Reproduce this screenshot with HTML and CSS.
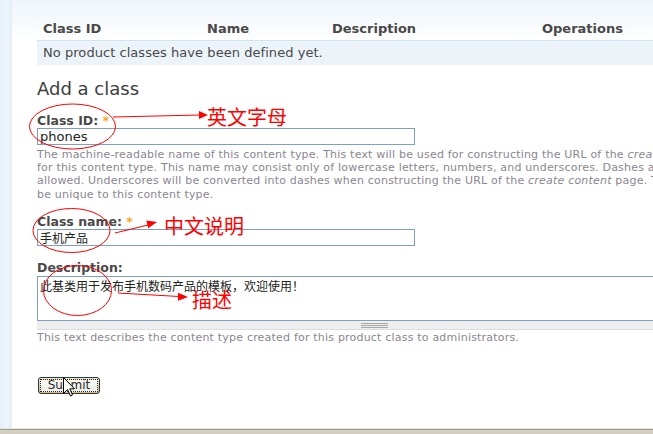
FILE: index.html
```html
<!DOCTYPE html>
<html>
<head>
<meta charset="utf-8">
<link rel="stylesheet" href="styles.css">
</head>
<body>
<div class="page">
  <div class="strip"></div>
  <div class="main">
    <div class="inner">
      <table class="classes">
        <thead>
          <tr>
            <th class="c1">Class ID</th>
            <th class="c2">Name</th>
            <th class="c3">Description</th>
            <th class="c4">Operations</th>
          </tr>
        </thead>
        <tbody>
          <tr><td colspan="4">No product classes have been defined yet.</td></tr>
        </tbody>
      </table>

      <h2 class="title">Add a class</h2>

      <div class="item">
        <label class="lbl">Class ID: <span class="req">*</span></label>
        <div class="input">phones</div>
        <div class="help">The machine-readable name of this content type. This text will be used for constructing the URL of the <em>create content</em> page<br>for this content type. This name may consist only of lowercase letters, numbers, and underscores. Dashes are not<br>allowed. Underscores will be converted into dashes when constructing the URL of the <em>create content</em> page. This name must<br>be unique to this content type.</div>
      </div>

      <div class="item item2">
        <label class="lbl">Class name: <span class="req">*</span></label>
        <div class="input cjk">手机产品</div>
      </div>

      <div class="item item3">
        <label class="lbl lbl-d">Description:</label>
        <div class="textarea cjk">此基类用于发布手机数码产品的模板，欢迎使用！</div>
        <div class="grippie"><span class="grip"></span></div>
        <div class="help">This text describes the content type created for this product class to administrators.</div>
      </div>

      <div class="actions">
        <button class="submit"><span class="focus">Submit</span></button>
      </div>
    </div>
  </div>
</div>
<div class="chrome"></div>

<svg class="notes" width="653" height="434" viewBox="0 0 653 434" xmlns="http://www.w3.org/2000/svg">
  <g fill="none" stroke="#f00" stroke-width="1">
    <ellipse cx="72.5" cy="126.5" rx="43" ry="22.5"/>
    <ellipse cx="71.5" cy="230.5" rx="38.5" ry="22"/>
    <ellipse cx="77.5" cy="290.5" rx="34" ry="25"/>
    <line x1="113" y1="117" x2="200" y2="115"/>
    <line x1="115" y1="233" x2="148" y2="225"/>
    <line x1="118" y1="293" x2="179" y2="296.5"/>
  </g>
  <g fill="#f00">
    <polygon points="199,111 208,115 199,119"/>
    <polygon points="157,222 148.2,228.2 146.4,220.4"/>
    <polygon points="188,297 178,292.8 178,300.8"/>
  </g>
  <g class="notetext" fill="#f00">
    <text x="207" y="125">英文字母</text>
    <text x="164" y="234">中文说明</text>
    <text x="192" y="308">描述</text>
  </g>
</svg>

<svg class="cursor" width="13" height="20" viewBox="0 0 13 20" xmlns="http://www.w3.org/2000/svg">
  <path d="M0.5 0.5 L0.5 16.5 L4.5 12.5 L7.5 19 L9.5 18 L6.8 11.8 L11.5 11.8 Z" fill="#fff" stroke="#000" stroke-width="1" stroke-linejoin="miter"/>
</svg>
</body>
</html>
```

FILE: styles.css
```css
html, body {
  margin: 0;
  padding: 0;
  width: 653px;
  height: 434px;
  overflow: hidden;
  background: #fff;
}
body {
  position: relative;
  font-family: "DejaVu Sans", Verdana, sans-serif;
  color: #494949;
}
.page {
  display: flex;
  height: 428px;
}
.strip {
  width: 12px;
  flex: none;
  background: linear-gradient(to right, #e6eff8 0, #eef5fc 60%, #e4edf6 100%);
}
.main {
  flex: 1;
  overflow: hidden;
  background: linear-gradient(#eef5fb 0, #ffffff 42px);
  padding-left: 25px;
}
.inner {
  width: 760px;
  padding-top: 18px;
}
.classes {
  border-collapse: collapse;
  width: 720px;
}
.classes th {
  height: 22px;
  padding: 0 0 0 6px;
  text-align: left;
  font-size: 13px;
  font-weight: bold;
  line-height: 22px;
  color: #494949;
}
.c1 { width: 158px; }
.c2 { width: 119px; }
.c3 { width: 204px; }
.classes td {
  height: 24px;
  padding: 0 0 0 6px;
  border-top: 1px solid #cfe3f2;
  background: #ecf4fa;
  font-size: 13px;
  line-height: 24px;
  color: #494949;
  letter-spacing: 0.05px;
}
.title {
  margin: 13px 0 0;
  font-size: 18px;
  font-weight: normal;
  line-height: 22px;
  color: #3d3d3d;
}
.item { margin-top: 13px; }
.item2 { margin-top: 13px; }
.item3 { margin-top: 14px; }
.lbl {
  display: block;
  height: 15px;
  font-size: 12.5px;
  font-weight: bold;
  line-height: 15px;
  color: #494949;
}
.lbl-d { margin-bottom: 1px; }
.req { color: #f5a623; font-weight: bold; }
.input {
  box-sizing: border-box;
  width: 378px;
  height: 17px;
  border: 1px solid #7f9fc2;
  padding: 0 2px;
  font-size: 13px;
  line-height: 15px;
  color: #222;
  background: #fff;
}
.cjk {
  font-family: "Noto Sans CJK SC", "DejaVu Sans", sans-serif;
  font-size: 12px;
}
.help {
  margin-top: 2.5px;
  font-size: 11px;
  line-height: 13.4px;
  letter-spacing: 0.2px;
  color: #8a8690;
  white-space: nowrap;
}
.item3 .help { margin-top: 0.5px; }
.textarea {
  box-sizing: border-box;
  width: 675px;
  height: 45px;
  border: 1px solid #7f9fc2;
  padding: 0 2px;
  line-height: 17px;
  color: #222;
}
.grippie {
  box-sizing: border-box;
  width: 675px;
  height: 9px;
  background: #eeeeee;
  border-bottom: 1px solid #dddddd;
  display: flex;
  justify-content: center;
  align-items: center;
}
.grip {
  width: 27px;
  height: 5px;
  background: repeating-linear-gradient(#a8a8a8 0, #a8a8a8 1px, transparent 1px, transparent 2px);
}
.actions {
  margin-top: 33px;
  padding-left: 1px;
}
.submit {
  box-sizing: border-box;
  width: 62px;
  height: 17px;
  padding: 1px 1px;
  margin: 0;
  border: 1px solid #1b3b6b;
  border-radius: 3px;
  background: linear-gradient(#fbe3a8, #f2b64a);
  font-family: "DejaVu Sans", Tahoma, sans-serif;
  font-size: 12px;
  color: #2a2a2a;
  display: flex;
}
.focus {
  flex: 1;
  display: block;
  background: linear-gradient(#fbfbf9, #eeede6);
  border: 1px dotted #222;
  line-height: 11px;
  text-align: center;
}
.chrome {
  height: 6px;
  border-top: 1px solid #e7e4da;
  background: linear-gradient(#9e9b8e 0, #9e9b8e 1px, #d6d2c6 1px, #cfcbbf 100%);
  box-sizing: border-box;
}
.notes {
  position: absolute;
  left: 0;
  top: 0;
}
.notetext {
  font-family: "Noto Sans CJK SC", sans-serif;
  font-size: 20px;
}
.cursor {
  position: absolute;
  left: 63px;
  top: 377px;
}
```
